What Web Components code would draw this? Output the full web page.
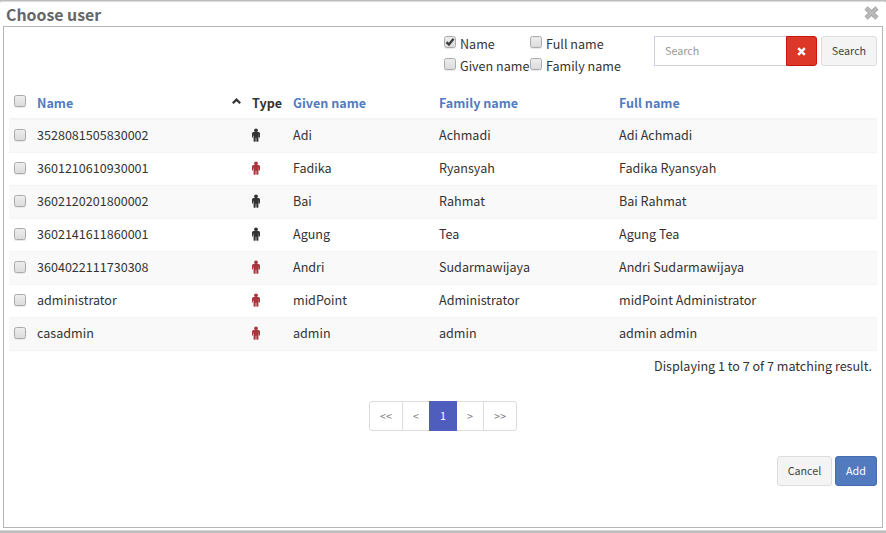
<!DOCTYPE html>
<html lang="en">
<head>
<meta charset="utf-8">
<title>Choose user</title>
<style>
html,body{margin:0;height:100%;overflow:hidden}
body{background:#bdbdbd;color:#333;font:12.57px/20px "Noto Sans CJK SC","Noto Sans CJK JP","Open Sans",sans-serif}
</style>
</head>
<body>
<modal-window heading="Choose user">
  <search-bar></search-bar>
  <user-table></user-table>
  <page-nav></page-nav>
  <dialog-actions></dialog-actions>
</modal-window>
<script>
class BaseElement extends HTMLElement {
  connectedCallback() {
    if (this.shadowRoot) return;
    this.attachShadow({mode: "open"}).innerHTML = "<style>*{box-sizing:border-box}" + this.styles() + "</style>" + this.markup();
  }
}

customElements.define("check-box", class extends BaseElement {
  styles() { return `:host{display:block;flex:none;width:12px;height:12px}
    div{width:12px;height:12px;border:1px solid #a9a9a9;border-radius:2.5px;background:linear-gradient(#ededed,#dcdcdc);box-shadow:0 1px 0 #e9e9e9}
    svg{display:block;margin:-1px 0 0 -1px}`; }
  markup() { return "<div>" + (this.hasAttribute("checked") ? `<svg width="12" height="12" viewBox="0 0 12 12"><path d="M2.5 6.2 4.9 8.5 9.6 2.7" fill="none" stroke="#3c3c3c" stroke-width="2.3"/></svg>` : "") + "</div>"; }
});

customElements.define("person-icon", class extends BaseElement {
  styles() { return `:host{display:block;width:8px;height:14px}svg{display:block}`; }
  markup() { return `<svg width="8" height="14" viewBox="0 0 8 14" fill="currentColor"><circle cx="4" cy="2.3" r="1.9"/><path d="M1.5 4.1h5Q8 4.1 8 5.6v3.3a.7.7 0 0 1-1.4 0V6.5h-.2v6.4a.9.9 0 0 1-1.1.9q-.9 0-1-.9V9.8h-.6v3.1q-.1.9-1 .9a.9.9 0 0 1-1.1-.9V6.5h-.2v2.4a.7.7 0 0 1-1.4 0V5.6Q0 4.1 1.5 4.1Z"/></svg>`; }
});

customElements.define("ui-button", class extends BaseElement {
  styles() { return `:host{display:flex;align-items:center;justify-content:center;box-sizing:border-box;height:30px;border:1px solid #ddd;border-radius:3px;background:#f4f4f4;color:#444;font-size:10.75px;line-height:18px}
    :host([kind=primary]){background:#527bbf;border-color:#446eae;color:#fff}
    :host([kind=danger]){background:#dd3727;border-color:#c9160a;color:#fff;border-radius:0 3px 3px 0}`; }
  markup() { return `<slot></slot>`; }
});

customElements.define("search-bar", class extends BaseElement {
  styles() { return `:host{display:flex;box-sizing:border-box;justify-content:flex-end;height:60px;padding:9px 5px 0 0}
    .options{display:grid;grid-template-columns:86px 95px;grid-auto-rows:22px;margin:-1px 29px 0 0}
    .option{display:flex;gap:4px;white-space:nowrap;line-height:18px}
    .option check-box{margin-top:1px}
    .input{width:132px;height:30px;border:1px solid #cfcfe2;border-right:0;padding:0 10px;font-size:10.75px;line-height:28px;color:#999}
    .clear{width:31px}.go{width:56px;margin-left:4px}
    svg{display:block}`; }
  markup() { return `<div class="options">
      ${[["Name",1],["Full name",0],["Given name",0],["Family name",0]].map(([t,c]) => `<div class="option"><check-box${c ? " checked" : ""}></check-box><span>${t}</span></div>`).join("")}
    </div>
    <div class="input">Search</div>
    <ui-button class="clear" kind="danger"><svg width="9" height="9" viewBox="0 0 9 9"><path d="M1.2 1.2 7.8 7.8M7.8 1.2 1.2 7.8" stroke="#fff" stroke-width="2.5"/></svg></ui-button>
    <ui-button class="go">Search</ui-button>`; }
});

customElements.define("user-table", class extends BaseElement {
  styles() { return `:host{display:block;padding:0 5px}
    .row,.head{display:grid;grid-template-columns:28px 215px 41px 146px 180px 1fr;align-items:center;height:33px;border-bottom:1px solid #f4f4f4;white-space:nowrap}
    .row{padding-bottom:2px}
    .row:nth-child(even){background:#f9f9f9}
    .head{border-bottom:2px solid #f4f4f4;font-weight:700;color:#527bbf}
    .head .type{color:#333}
    .name{display:flex;justify-content:space-between;align-items:center;padding-right:11px}
    .name svg{margin-top:-4px}
    check-box{margin-left:5px}.head check-box{margin-top:-3px}
    .row check-box{margin-top:-1px}
    .row person-icon{color:#333}.row person-icon.red{color:#a9363d}
    .summary{padding:5px 5px 0 0;text-align:right}`; }
  markup() {
    const rows = [["3528081505830002",0,"Adi","Achmadi"],["3601210610930001",1,"Fadika","Ryansyah"],["3602120201800002",0,"Bai","Rahmat"],["3602141611860001",0,"Agung","Tea"],["3604022111730308",1,"Andri","Sudarmawijaya"],["administrator",1,"midPoint","Administrator"],["casadmin",1,"admin","admin"]];
    return `<div class="table"><div class="head"><check-box></check-box><div class="name"><span>Name</span><svg width="9" height="6" viewBox="0 0 9 6"><path d="M.8 5.2 4.5 1.6 8.2 5.2" fill="none" stroke="#333" stroke-width="2.2"/></svg></div><span class="type">Type</span><span>Given name</span><span>Family name</span><span>Full name</span></div>
    ${rows.map(r => `<div class="row"><check-box></check-box><span>${r[0]}</span><person-icon class="${r[1] ? "red" : ""}"></person-icon><span>${r[2]}</span><span>${r[3]}</span><span>${r[2]} ${r[3]}</span></div>`).join("")}</div>
    <div class="summary">Displaying 1 to 7 of 7 matching result.</div>`;
  }
});

customElements.define("page-nav", class extends BaseElement {
  styles() { return `:host{display:flex;justify-content:center;margin-top:25px;font-size:10.75px;color:#777}
    .pages{display:grid;grid-template-columns:32px 27px 28px 26px 33px;height:30px;border:1px solid #ddd;border-radius:3px;width:148px}
    span{display:flex;align-items:center;justify-content:center}
    span+span{border-left:1px solid #ddd}
    .on{background:#4f5dbd;color:#fff;margin:-1px 0;border:0!important}
    .on+span{border-left:0}`; }
  markup() { return `<div class="pages"><span>&lt;&lt;</span><span>&lt;</span><span class="on">1</span><span>&gt;</span><span>&gt;&gt;</span></div>`; }
});

customElements.define("dialog-actions", class extends BaseElement {
  styles() { return `:host{display:flex;justify-content:flex-end;gap:3px;margin-top:25px;padding-right:5px}
    .cancel{width:55px}.add{width:42px}`; }
  markup() { return `<ui-button class="cancel">Cancel</ui-button><ui-button class="add" kind="primary">Add</ui-button>`; }
});

customElements.define("modal-window", class extends BaseElement {
  styles() { return `:host{display:flex;flex-direction:column;box-sizing:border-box;height:533px;padding:2px 3px 5px;background:linear-gradient(#bdbdbd 0 1px,#dcdcdc 1px 2px,#fff 2px 530px,#d8d8d8 530px 531px,#bdbdbd 531px);border-radius:4px 4px 0 0}
    header{display:flex;justify-content:space-between;height:24px;padding:0 4px 0 3px}
    h1{margin:0;font-size:15.9px;line-height:25px;font-weight:700;color:#666}
    header svg{margin:4px 0 0}
    main{flex:1;border:1px solid #b5b5b5}`; }
  markup() { return `<header><h1>${this.getAttribute("heading")}</h1><svg width="15" height="14" viewBox="0 0 15 14"><path d="M2 2 13 12M13 2 2 12" fill="none" stroke="#a3a3a3" stroke-width="4.5"/><path d="M2.4 2.4 12.6 11.6M12.6 2.4 2.4 11.6" fill="none" stroke="#b9b9b9" stroke-width="2.8"/></svg></header><main><slot></slot></main>`; }
});
</script>
</body>
</html>
